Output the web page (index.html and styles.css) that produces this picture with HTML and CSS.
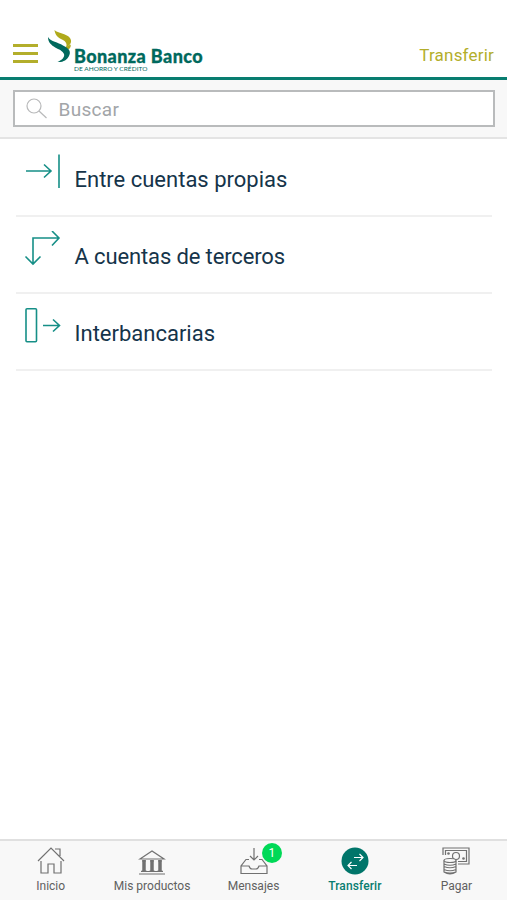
FILE: index.html
```
<!DOCTYPE html>
<html lang="es">
<head>
<meta charset="utf-8">
<title>Bonanza Banco</title>
<link rel="stylesheet" href="styles.css">
</head>
<body>
<div class="app">
  <header class="header">
    <div class="menu"><span></span><span></span><span></span></div>
    <svg class="mark" width="25" height="35" viewBox="0 0 25 35">
      <path fill="#b0aa1b" d="M6.500 0C10 3.500 18 3 22 8C24.500 12 22.500 15 18 17.500C19.500 14 18 11.500 14 9.500C10 7.500 7 5 6.500 0Z"/>
      <path fill="#b0aa1b" d="M17 17.500L22.500 14.500Q23.500 17 20.500 19.500Z"/>
      <path fill="#00695d" d="M0 7C3 12 10 12 15 15.500C22 19 23 22 21 26C19 30 15 32.500 9.500 32C14 30 17 27 16 24C14 18 0 18 0 7Z"/>
    </svg>
    <div class="brand">
      <div class="brand-name">Bonanza Banco</div>
      <div class="brand-sub">DE AHORRO Y CRÉDITO</div>
    </div>
    <div class="title">Transferir</div>
  </header>
  <div class="search-bar">
    <div class="search">
      <svg width="22" height="22" viewBox="0 0 22 22" fill="none" stroke="#b8b9ba" stroke-width="1.2"><circle cx="8" cy="8" r="7"/><path d="M13 13L20.500 20"/></svg>
      <span>Buscar</span>
    </div>
  </div>
  <main class="list">
    <div class="row">
      <svg width="40" height="36" viewBox="0 0 40 36"><path d="M2 17H26M20 10.500L27 17L20 23.500M35 0.500V34"/></svg>
      <span>Entre cuentas propias</span>
    </div>
    <div class="row">
      <svg width="40" height="36" viewBox="0 0 40 36"><path d="M9 33V7H35M28 0L35 7L28 14.500M1.500 25.500L9 33L16.500 25.500"/></svg>
      <span class="third">A cuentas de terceros</span>
    </div>
    <div class="row">
      <svg width="40" height="36" viewBox="0 0 40 36"><rect x="2" y="0.800" width="10.500" height="33" rx="1"/><path d="M19 17.500H35M29 11.500L35.500 17.500L29 23.500"/></svg>
      <span>Interbancarias</span>
    </div>
  </main>
  <nav class="tabs">
    <div class="tab">
      <svg width="28" height="28" viewBox="0 0 28 28"><path d="M1 14L14 1L27 14M18 2H23V9M4 14V26H11V17H17V26H24V14"/></svg>
      <span>Inicio</span>
    </div>
    <div class="tab">
      <svg width="28" height="28" viewBox="0 0 28 28"><path d="M2 12L14 4L26 12ZM1 27H27M3 24.500H25M4 14H8M3.500 24H8.500M12 14H16M11.500 24H16.500M20 14H24M19.500 24H24.500"/><path class="columns" d="M6 13V24M14 13V24M22 13V24"/></svg>
      <span>Mis productos</span>
    </div>
    <div class="tab">
      <svg width="28" height="28" viewBox="0 0 28 28"><path d="M14 1V13M10 9L14 13L18 9M9 12.500H6L1 19V26.500H27V19L22 12.500H19M1 19H9Q10 22 12 22H16Q18 22 19 19H27"/></svg>
      <span class="badge">1</span>
      <span>Mensajes</span>
    </div>
    <div class="tab active">
      <svg width="28" height="28" viewBox="0 0 28 28"><circle cx="14" cy="14" r="13.500"/><path d="M13 10.500H22M18.500 7L22 10.500L18.500 14M16 18.500H7M10.500 15L7 18.500L10.500 22"/></svg>
      <span>Transferir</span>
    </div>
    <div class="tab">
      <svg width="28" height="28" viewBox="0 0 28 28"><path d="M1 8V1H27V17H16M3.500 8V3.500H24.500V14.500H16"/><circle cx="14" cy="9" r="3.500"/><circle class="dot" cx="6.500" cy="6.500" r="1.300"/><circle class="dot" cx="21.500" cy="11.500" r="1.300"/><path class="coins" d="M2 14V25Q8 29 14 25V14ZM2 17Q8 19.500 14 17M2 19.500Q8 22 14 19.500M2 22.500Q8 25 14 22.500M2 25Q8 27 14 25"/><ellipse class="coins" cx="8" cy="13.500" rx="6" ry="2"/></svg>
      <span>Pagar</span>
    </div>
  </nav>
</div>
</body>
</html>
```

FILE: styles.css
```
* { box-sizing: border-box; }
body { margin: 0; font-family: Roboto, sans-serif; background: #fff; }
.app { display: flex; flex-direction: column; height: 900px; }
svg { display: block; flex: none; }
.header { display: flex; height: 80px; padding: 29px 13px 0 13px; border-bottom: 3px solid #087d70; }
.menu { width: 25px; margin: 15px 10px 0 0; display: flex; flex-direction: column; gap: 5px; }
.menu span { height: 3px; background: #b3ae2b; }
.mark { margin-top: 1px; }
.brand { margin: 18px 0 0 1px; white-space: nowrap; font-family: Lato, sans-serif; color: #00695d; }
.brand-name { font-size: 18px; line-height: 18px; font-weight: 900; letter-spacing: 0.4px; -webkit-text-stroke: 0.3px #00695d; }
.brand-sub { font-size: 6.500px; line-height: 7px; letter-spacing: 0.04px; }
.title { margin: 16px 0 0 auto; font-size: 17px; line-height: 20px; letter-spacing: 0.2px; color: #b3ae2b; }
.search-bar { height: 59px; padding: 10px 12px 0 13px; background: #f8f8f8; border-bottom: 2px solid #e4e4e4; }
.search { display: flex; height: 37px; padding: 6px 0 0 11px; border: 2px solid #b9bbbc; background: #fff; color: #a2a5a8; font-size: 19px; line-height: 23px; letter-spacing: 0.3px; }
.search svg { margin-right: 10.500px; }
.list { flex: 1; padding: 1px 15px 0 16px; }
.row { display: flex; height: 77px; padding: 14px 0 0 8px; border-bottom: 2px solid #f0f0f0; color: #15344a; font-size: 22px; line-height: 26px; }
.row svg { fill: none; stroke: #168f87; stroke-width: 1.600; margin-right: 10.500px; }
.row span { margin-top: 13px; }
.row .third { letter-spacing: -0.13px; }
.tabs { display: flex; height: 61px; background: #f8f8f8; border-top: 2px solid #e0e0e0; }
.tab { position: relative; flex: 1; display: flex; flex-direction: column; align-items: center; padding-top: 6px; color: #606060; font-size: 12px; line-height: 16px; white-space: nowrap; }
.tab span { margin-top: 3px; }
.tab svg { fill: none; stroke: #717171; stroke-width: 1.200; }
.tab .columns { stroke-width: 3.500; }
.tab .dot { fill: #717171; stroke: none; }
.tab .coins { fill: #f8f8f8; }
.active { color: #087d70; font-weight: 500; letter-spacing: 0.1px; }
.tab.active circle { fill: #00756a; stroke: none; }
.tab.active path { stroke: #fff; }
.tab .badge { position: absolute; left: 59px; top: 2px; width: 20px; height: 20px; margin: 0; border-radius: 50%; background: #00d957; color: #fff; font-size: 12px; line-height: 20px; text-align: center; }
```
